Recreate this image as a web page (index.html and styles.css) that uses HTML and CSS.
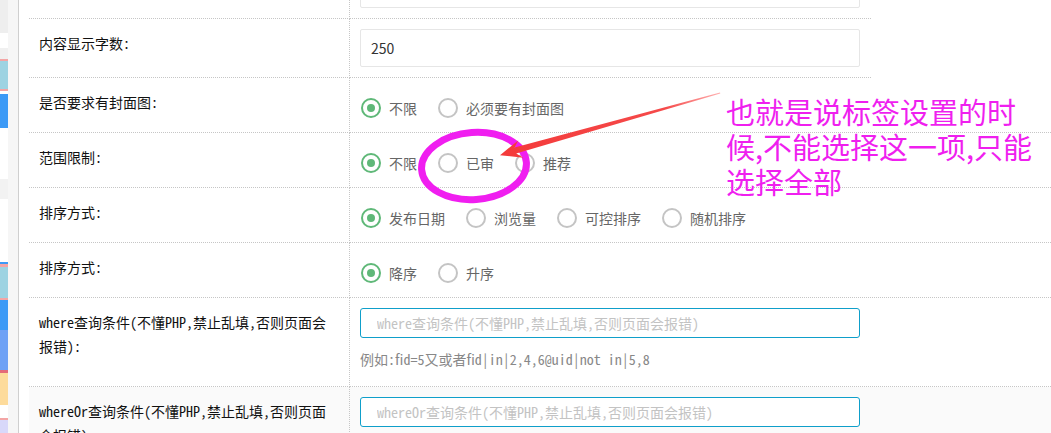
FILE: index.html
```html
<!DOCTYPE html>
<html lang="zh-CN">
<head>
<meta charset="utf-8">
<title>标签设置</title>
<link rel="stylesheet" href="styles.css">
</head>
<body>
<div class="page">
  <aside class="side">
    <div class="b1"></div><div class="b2"></div><div class="b3"></div><div class="pk"></div>
    <div class="lb h28"></div><div class="pk"></div><div class="w3"></div>
    <div class="bl h34"></div><div class="b4"></div><div class="b5"></div><div class="b6"></div>
    <div class="bline"></div><div class="pk3"></div><div class="lb h31"></div><div class="pk"></div>
    <div class="bl h30"></div><div class="bl2"></div><div class="rd"></div><div class="or"></div>
    <div class="w13"></div><div class="pk"></div><div class="lv"></div>
  </aside>
  <div class="gutter"></div>
  <main class="main">
    <div class="table">
      <div class="row narrow">
        <div class="lab"></div>
        <div class="val"><input class="ipt" type="text"></div>
        <div class="pad"></div>
      </div>
      <div class="row narrow">
        <div class="lab">内容显示字数:</div>
        <div class="val"><input class="ipt" type="text" value="250"></div>
        <div class="pad"></div>
      </div>
      <div class="row">
        <div class="lab">是否要求有封面图:</div>
        <div class="val radios">
          <span class="radio on"><i></i>不限</span>
          <span class="radio"><i></i>必须要有封面图</span>
        </div>
      </div>
      <div class="row">
        <div class="lab">范围限制:</div>
        <div class="val radios">
          <span class="radio on"><i></i>不限</span>
          <span class="radio"><i></i>已审</span>
          <span class="radio"><i></i>推荐</span>
        </div>
      </div>
      <div class="row">
        <div class="lab">排序方式:</div>
        <div class="val radios">
          <span class="radio on"><i></i>发布日期</span>
          <span class="radio"><i></i>浏览量</span>
          <span class="radio"><i></i>可控排序</span>
          <span class="radio"><i></i>随机排序</span>
        </div>
      </div>
      <div class="row">
        <div class="lab">排序方式:</div>
        <div class="val radios">
          <span class="radio on"><i></i>降序</span>
          <span class="radio"><i></i>升序</span>
        </div>
      </div>
      <div class="row">
        <div class="lab">where查询条件(不懂PHP,禁止乱填,否则页面会<br>报错):</div>
        <div class="val">
          <input class="ipt q" type="text" placeholder="where查询条件(不懂PHP,禁止乱填,否则页面会报错)">
          <div class="help">例如:fid=5又或者fid|in|2,4,6@uid|not in|5,8</div>
        </div>
      </div>
      <div class="row alt">
        <div class="lab">whereOr查询条件(不懂PHP,禁止乱填,否则页面<br>会报错):</div>
        <div class="val">
          <input class="ipt q" type="text" placeholder="whereOr查询条件(不懂PHP,禁止乱填,否则页面会报错)">
        </div>
      </div>
    </div>
  </main>
  <svg class="marks" width="1051" height="433" viewBox="0 0 1051 433">
    <defs>
      <linearGradient id="ag" x1="720" y1="93" x2="500" y2="155" gradientUnits="userSpaceOnUse">
        <stop offset="0" stop-color="#ffb0b0"/>
        <stop offset="0.25" stop-color="#f54a4a"/>
        <stop offset="1" stop-color="#f43a3a"/>
      </linearGradient>
    </defs>
    <ellipse cx="474" cy="166" rx="52.5" ry="33.5" fill="none" stroke="#f01ef0" stroke-width="7" transform="rotate(-4 474 166)"/>
    <polygon fill="url(#ag)" points="720,92.6 514.6,147.6 518.4,140.2 500,155.2 523.4,157.8 516.2,153.4 720.3,93.6"/>
  </svg>
  <div class="note">也就是说标签设置的时<br>候,不能选择这一项,只能<br>选择全部</div>
</div>
</body>
</html>
```
FILE: styles.css
```css
* { box-sizing: border-box; }
html, body { margin: 0; padding: 0; height: 100%; overflow: hidden; background: #fff; }
body {
  font-family: "Noto Sans CJK SC", "Noto Sans", sans-serif;
  font-size: 14px;
  color: #333;
}
.page { position: relative; display: flex; width: 1051px; height: 433px; overflow: hidden; }

/* left app sidebar strip */
.side { width: 8px; flex: none; display: flex; flex-direction: column; }
.side div { flex: none; }
.b1 { height: 33px; background: #eeeeee; }
.b2 { height: 15px; background: #ffffff; }
.b3 { height: 11px; background: #f0f0f0; }
.pk { height: 2px; background: #f3a5a5; }
.pk3 { height: 3px; background: #f3a5a5; }
.lb { background: #9dd3e2; }
.h28 { height: 28px; }
.h31 { height: 31px; }
.w3 { height: 3px; background: #fff; }
.bl { background: #3c9af6; }
.h34 { height: 34px; }
.h30 { height: 30px; }
.b4 { height: 51px; background: #fff; }
.b5 { height: 20px; background: #f2f2f2; }
.b6 { height: 63px; background: #fff; }
.bline { height: 2px; background: #3c9af6; }
.bl2 { height: 40px; background: #6ea1f5; }
.rd { height: 3px; background: #e46a7a; }
.or { height: 32px; background: #fddb9b; }
.w13 { height: 13px; background: #fff; }
.lv { height: 13px; background: #d8d8fa; }

.gutter { width: 11px; flex: none; background: #f6f6f6; border-right: 1px solid #cfcfcf; }

.main { flex: 1; padding-left: 10px; overflow: hidden; background: #fff; }
.table { margin-top: -40px; }

.row { display: grid; grid-template-columns: 321px 1fr; }
.row.narrow { grid-template-columns: 321px 521px 1fr; }
.row.alt { background: #fafafa; }

.lab {
  padding: 12px 10px;
  line-height: 24px;
  color: #111;
  border-right: 1px dotted #c6c6c6;
  border-bottom: 1px dotted #c6c6c6;
  font-feature-settings: "hwid" 1;
}
.val { padding: 10px; border-bottom: 1px dotted #c6c6c6; }

.ipt {
  display: block;
  width: 500px;
  height: 38px;
  margin: 0;
  padding: 0 10px;
  border: 1px solid #e6e6e6;
  border-radius: 2px;
  background: #fff;
  font: inherit;
  font-size: 14px;
  color: #333;
  outline: none;
}
.ipt.q {
  height: 30px;
  padding-left: 16px;
  border-color: #0f9fca;
  border-radius: 3px;
  font-feature-settings: "hwid" 1;
}
.ipt.q::placeholder { color: #c3c3c3; }

.help {
  margin-top: 10px;
  padding-bottom: 6px;
  line-height: 22px;
  color: #888;
  font-feature-settings: "hwid" 1;
}

.radios { display: flex; align-items: flex-start; }
.radio {
  display: inline-flex;
  align-items: center;
  height: 28px;
  line-height: 28px;
  margin: 6px 10px 0 0;
  padding-right: 10px;
  color: #666;
  white-space: nowrap;
}
.radio i {
  position: relative;
  width: 20px;
  height: 20px;
  margin: 0 8px 0 1px;
  border: 2px solid #c4c4c4;
  border-radius: 50%;
  background: #fff;
}
.radio.on i { border-color: #5fb878; }
.radio.on i::after {
  content: "";
  position: absolute;
  left: 4px;
  top: 4px;
  width: 8px;
  height: 8px;
  border-radius: 50%;
  background: #5fb878;
}

/* annotation overlay */
.marks { position: absolute; left: 0; top: 0; pointer-events: none; }
.note {
  position: absolute;
  left: 726px;
  top: 94px;
  font-size: 29px;
  line-height: 35px;
  color: #ef1fef;
  white-space: nowrap;
  pointer-events: none;
}
```
